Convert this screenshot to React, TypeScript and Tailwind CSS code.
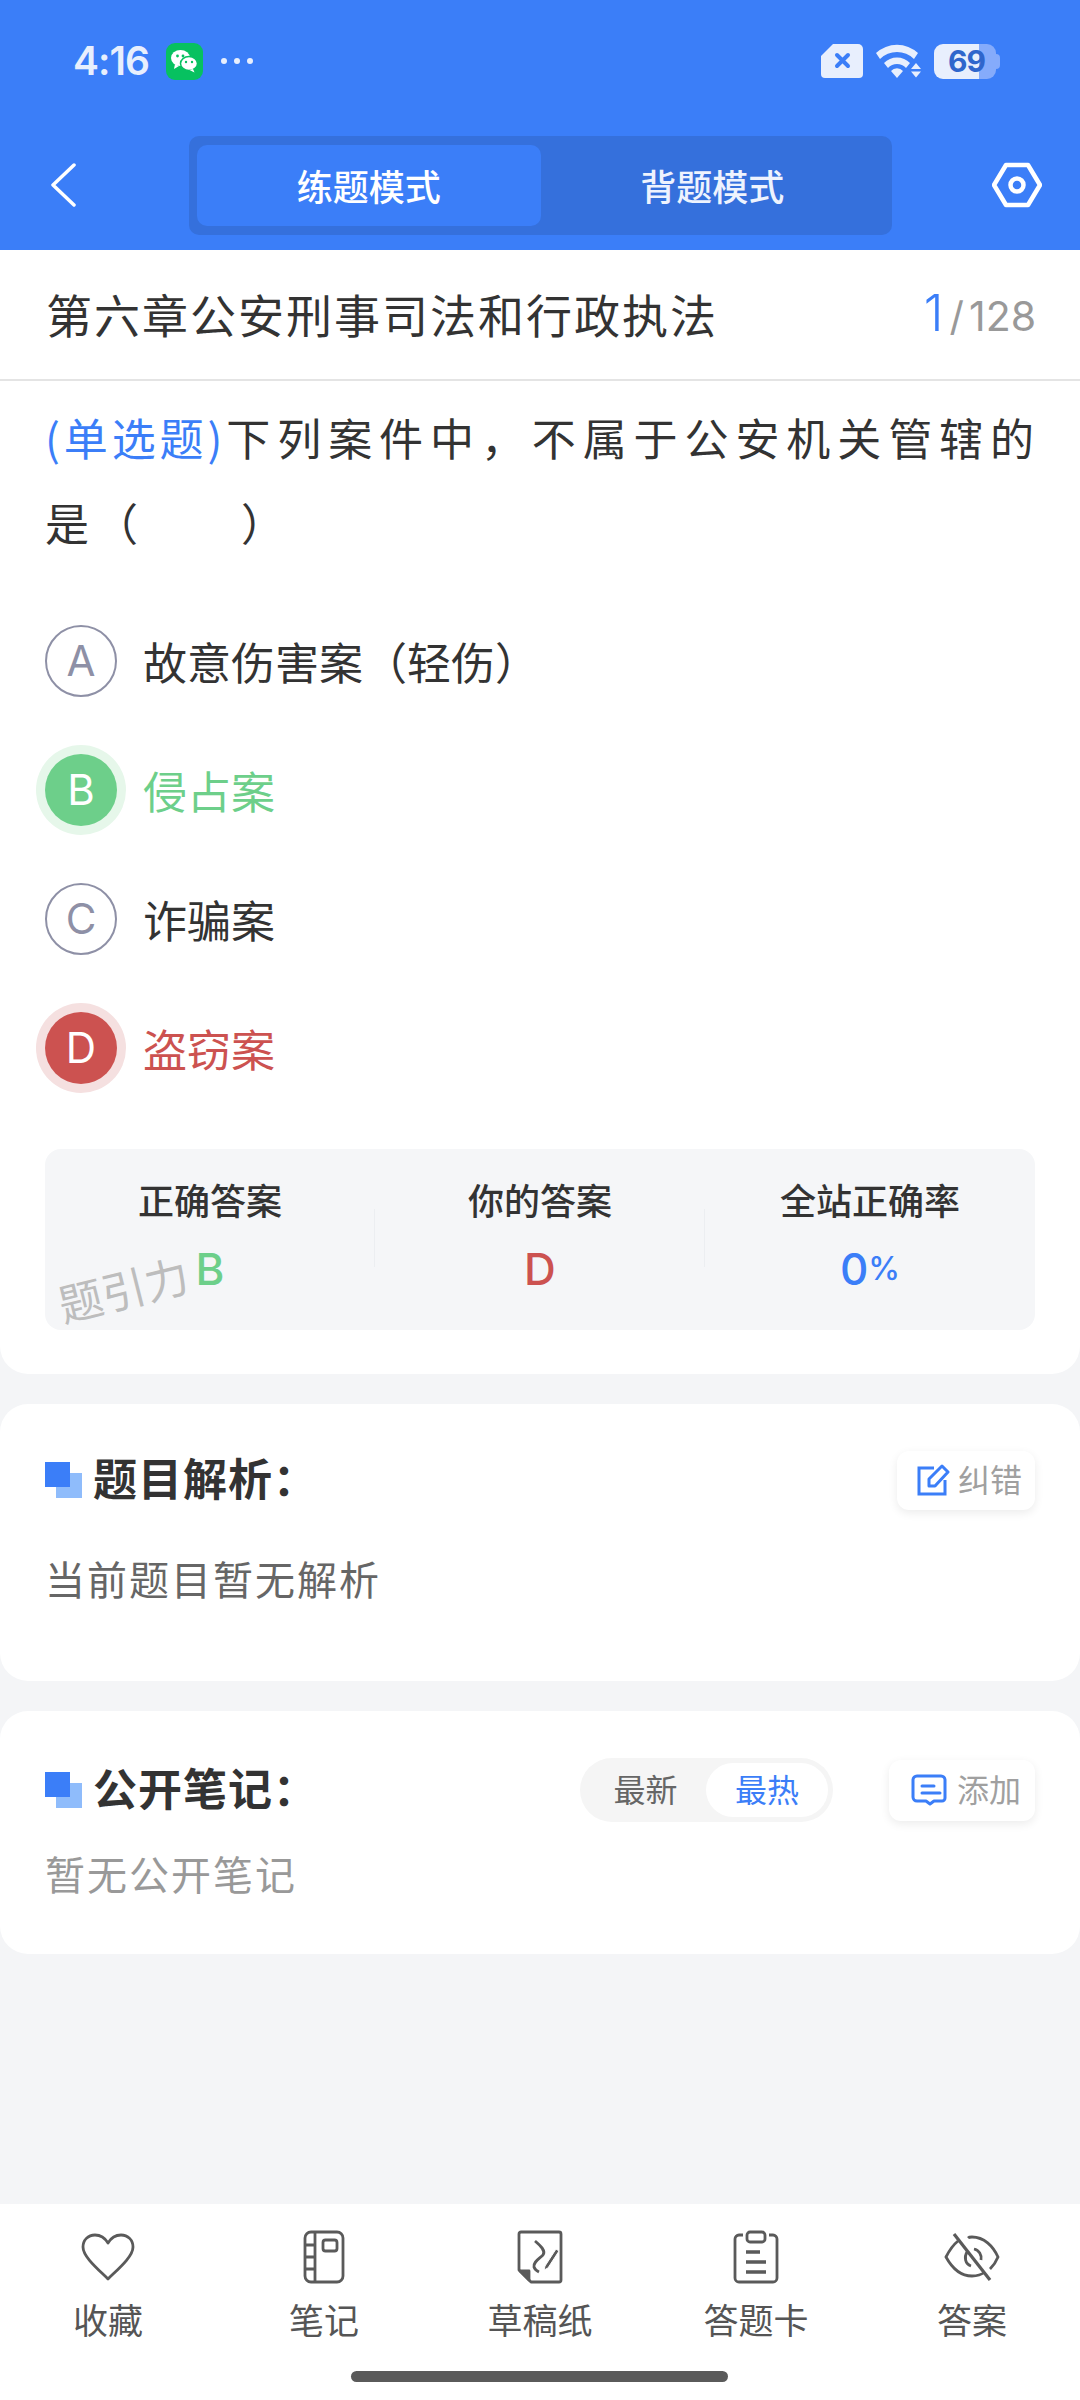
import React from "react";

const options = [
  { key: "A", text: "故意伤害案（轻伤）", state: "idle" },
  { key: "B", text: "侵占案", state: "right" },
  { key: "C", text: "诈骗案", state: "idle" },
  { key: "D", text: "盗窃案", state: "wrong" },
];

function StatusBar() {
  return (
    <div className="flex h-[122px] items-center justify-between pl-[73px] pr-[80px]">
      <div className="flex items-center">
        <span className="font-['Inter',sans-serif] text-[39px] font-semibold tracking-[-1px] text-[#e8effd]">4:16</span>
        <div className="ml-[17px] flex h-[37px] w-[37px] items-center justify-center rounded-[9px] bg-[#07c160]">
          <svg width="28" height="24" viewBox="0 0 28 24">
            <ellipse cx="10.5" cy="9" rx="9.5" ry="8" fill="#fff" />
            <path d="M5 15l-1 5 5-3z" fill="#fff" />
            <ellipse cx="19" cy="14.5" rx="8.5" ry="7" fill="#fff" stroke="#07c160" strokeWidth="1.5" />
            <path d="M23 20l1.5 3.5-5-2.5z" fill="#fff" />
            <circle cx="7.5" cy="7" r="1.4" fill="#07c160" />
            <circle cx="13" cy="7" r="1.4" fill="#07c160" />
            <circle cx="16" cy="13" r="1.2" fill="#07c160" />
            <circle cx="22" cy="13" r="1.2" fill="#07c160" />
          </svg>
        </div>
        <div className="ml-[18px] flex gap-[7px]">
          <span className="h-[6px] w-[6px] rounded-full bg-[#e8effd]" />
          <span className="h-[6px] w-[6px] rounded-full bg-[#e8effd]" />
          <span className="h-[6px] w-[6px] rounded-full bg-[#e8effd]" />
        </div>
      </div>
      <div className="flex items-center">
        <svg width="44" height="36" viewBox="0 0 44 36">
          <path d="M13 1h25a5 5 0 0 1 5 5v25a4 4 0 0 1-4 4H5a4 4 0 0 1-4-4V13z" fill="#e8effd" />
          <path d="M17 12l11 11M28 12L17 23" stroke="#3b7ef8" strokeWidth="4" strokeLinecap="round" />
        </svg>
        <svg className="ml-[12px]" width="46" height="36" viewBox="0 0 46 36">
          <path d="M0 10a31 31 0 0 1 42 0l-4 6a24 24 0 0 0-34 0z" fill="#e8effd" />
          <path d="M8 20a18 18 0 0 1 26 0l-4 5a12 12 0 0 0-18 0z" fill="#e8effd" />
          <path d="M15 28a8 8 0 0 1 12 0l-6 7z" fill="#e8effd" />
          <path d="M40 20l5 6H35zM35 28.500h10l-5 6z" fill="#e8effd" />
        </svg>
        <div className="relative ml-[12px] flex h-[35px] w-[66px] items-center">
          <div className="absolute right-0 top-[10px] h-[15px] w-[6px] rounded-r-[4px] bg-[#85abfb]" />
          <div className="absolute left-[40px] top-0 h-[35px] w-[22px] rounded-r-[9px] bg-[#85abfb]" />
          <div className="absolute left-0 top-0 h-[35px] w-[45px] rounded-l-[9px] bg-[#e8effd]" />
          <span className="relative ml-[14px] font-['Inter',sans-serif] text-[30px] font-bold tracking-[-1px] text-[#2f66cc]">69</span>
        </div>
      </div>
    </div>
  );
}

function NavBar() {
  return (
    <div className="flex h-[128px] items-center pb-[2px]">
      <div className="flex w-[189px] pl-[50px]">
        <svg width="27" height="44" viewBox="0 0 27 44" fill="none" stroke="#fff" strokeWidth="3.500" strokeLinecap="round" strokeLinejoin="round">
          <path d="M24 2L3 22l21 20" />
        </svg>
      </div>
      <div className="flex h-[99px] w-[703px] rounded-[10px] bg-[#3570dc] px-[8px] py-[9px]">
        <div className="flex flex-1 items-center justify-center rounded-[10px] bg-[#3b7ef8] text-[36px] font-medium text-white">练题模式</div>
        <div className="flex flex-1 items-center justify-center text-[36px] font-medium text-[#eef3fe]">背题模式</div>
      </div>
      <div className="flex flex-1 justify-end pr-[38px]">
        <svg width="50" height="46" viewBox="0 0 50 46" fill="none" stroke="#fff" strokeWidth="4.500" strokeLinejoin="round">
          <path d="M14 3h22l12 20-12 20H14L2 23z" />
          <circle cx="25" cy="23" r="6.500" />
        </svg>
      </div>
    </div>
  );
}

function OptionRow({ item }: { item: (typeof options)[number] }) {
  return (
    <div className="flex h-[129px] items-center">
      {item.state === "idle" && (
        <div className="flex h-[72px] w-[72px] items-center justify-center rounded-full border-2 border-[#8e90a6] font-['Inter',sans-serif] text-[42px] text-[#8e90a6]">{item.key}</div>
      )}
      {item.state === "right" && (
        <div className="flex h-[72px] w-[72px] items-center justify-center rounded-full bg-[#6dcf8a] font-['Inter',sans-serif] text-[42px] text-white shadow-[0_0_0_9px_#e6f7ea]">{item.key}</div>
      )}
      {item.state === "wrong" && (
        <div className="flex h-[72px] w-[72px] items-center justify-center rounded-full bg-[#cc5250] font-['Inter',sans-serif] text-[42px] text-white shadow-[0_0_0_9px_#f5e0e0]">{item.key}</div>
      )}
      <span
        className={
          item.state === "right"
            ? "ml-[26px] text-[44px] text-[#6dcf8a]"
            : item.state === "wrong"
              ? "ml-[26px] text-[44px] text-[#cc5250]"
              : "ml-[26px] text-[44px] text-[#333333]"
        }
      >
        {item.text}
      </span>
    </div>
  );
}

function SectionTitle({ text }: { text: string }) {
  return (
    <div className="flex items-center">
      <div className="relative h-[36px] w-[37px]">
        <div className="absolute bottom-0 right-0 h-[25px] w-[26px] bg-[#8fbcfb]" />
        <div className="absolute left-0 top-0 h-[25px] w-[25px] bg-[#3b7ef8]" />
      </div>
      <span className="ml-[11px] pb-[6px] text-[44px] font-bold leading-[60px] tracking-[1px] text-[#333333]">{text}</span>
    </div>
  );
}

function Stat({ label, children, divider }: { label: string; children: React.ReactNode; divider?: boolean }) {
  return (
    <div className="relative flex flex-col items-center pt-[27px]">
      <span className="text-[36px] font-medium leading-[46px] text-[#333333]">{label}</span>
      <div className="mt-[24px] flex h-[46px] items-center font-['Inter',sans-serif] text-[44px] font-medium">{children}</div>
      {divider && <div className="absolute right-0 top-[60px] h-[58px] w-px bg-[#eceef1]" />}
    </div>
  );
}

function BottomItem({ label, children }: { label: string; children: React.ReactNode }) {
  return (
    <div className="flex w-[216px] flex-col items-center">
      <div className="flex h-[56px] items-center justify-center">{children}</div>
      <span className="mt-[11px] text-[35px] leading-[46px] text-[#555555]">{label}</span>
    </div>
  );
}

export default function App() {
  return (
    <div className="flex h-[2400px] w-[1080px] flex-col overflow-hidden bg-[#f4f5f7] font-['Noto_Sans_CJK_SC','Noto_Sans',sans-serif]">
      <div className="h-[250px] bg-[#3b7ef8]">
        <StatusBar />
        <NavBar />
      </div>

      <div className="rounded-b-[28px] bg-white pb-[44px]">
        <div className="flex h-[131px] items-center justify-between border-b-2 border-[#e4e4e4] pb-[3px] pl-[46px] pr-[44px]">
          <span className="text-[46px] tracking-[2px] text-[#333333]">第六章公安刑事司法和行政执法</span>
          <div className="flex items-baseline font-['Inter',sans-serif] text-[#999999]">
            <span className="text-[50px] font-light text-[#3b7ef8]">1</span>
            <span className="ml-[6px] text-[40px]">/</span>
            <span className="ml-[5px] text-[41px]">128</span>
          </div>
        </div>

        <div className="pl-[45px] pr-[41px] pt-[14px]">
          <p className="text-justify text-[44px] leading-[85px] tracking-[5px] text-[#333333]">
            <span className="tracking-[2px] text-[#3b7ef8]">(单选题)</span>下列案件中，不属于公安机关管辖的是（　　）
          </p>

          <div className="mt-[31px]">
            {options.map((item) => (
              <OptionRow key={item.key} item={item} />
            ))}
          </div>

          <div className="relative mr-[4px] mt-[37px] grid h-[181px] grid-cols-3 rounded-[16px] bg-[#f5f6f8]">
            <Stat label="正确答案" divider>
              <span className="text-[#6dcf8a]">B</span>
            </Stat>
            <Stat label="你的答案" divider>
              <span className="text-[#cc5250]">D</span>
            </Stat>
            <Stat label="全站正确率">
              <span className="text-[#3b7ef8]">0</span>
              <span className="text-[32px] text-[#3b7ef8]">%</span>
            </Stat>
            <span className="absolute left-[12px] top-[113px] -rotate-[14deg] text-[44px] leading-[52px] text-[#bdbdbd]">题引力</span>
          </div>
        </div>
      </div>

      <div className="mt-[30px] h-[277px] rounded-[28px] bg-white px-[45px] pt-[43px]">
        <div className="flex items-center justify-between">
          <SectionTitle text="题目解析：" />
          <div className="flex h-[59px] w-[138px] items-center gap-[7px] rounded-[12px] bg-white pl-[20px] shadow-[0_3px_10px_rgba(0,0,0,0.08)]">
            <svg width="34" height="32" viewBox="0 0 34 32" fill="none" stroke="#3b7ef8" strokeWidth="3">
              <path d="M17 4H2v26h26V16" />
              <path d="M12 22v-7L25 2l6 6-13 14z" strokeLinejoin="round" />
            </svg>
            <span className="pb-[4px] text-[32px] text-[#a0a0a0]">纠错</span>
          </div>
        </div>
        <p className="mt-[37px] text-[40px] leading-[56px] tracking-[2px] text-[#666666]">当前题目暂无解析</p>
      </div>

      <div className="mt-[30px] h-[243px] rounded-[28px] bg-white px-[45px] pt-[46px]">
        <div className="flex items-center">
          <SectionTitle text="公开笔记：" />
          <div className="ml-auto flex h-[64px] w-[253px] items-center rounded-full bg-[#f5f5f5] p-[5px] text-[32px]">
            <span className="flex-1 pb-[4px] text-center text-[#666666]">最新</span>
            <span className="flex h-[54px] w-[122px] items-center justify-center rounded-full bg-white pb-[4px] text-[#3b7ef8]">最热</span>
          </div>
          <div className="ml-[56px] flex h-[61px] w-[146px] items-center gap-[10px] rounded-[12px] bg-white pl-[22px] shadow-[0_3px_10px_rgba(0,0,0,0.08)]">
            <svg width="36" height="32" viewBox="0 0 36 32" fill="none" stroke="#3b7ef8" strokeWidth="3" strokeLinecap="round">
              <path d="M6 2h24a4 4 0 0 1 4 4v18a3 3 0 0 1-3 3h-8l-4 3-4-3H6a4 4 0 0 1-4-4V6a4 4 0 0 1 4-4z" strokeLinejoin="round" />
              <path d="M11 12h12M11 19h18" />
            </svg>
            <span className="pb-[4px] text-[32px] text-[#a0a0a0]">添加</span>
          </div>
        </div>
        <p className="mt-[22px] text-[40px] leading-[56px] tracking-[2px] text-[#999999]">暂无公开笔记</p>
      </div>

      <div className="flex-1" />

      <div className="relative h-[196px] bg-white">
        <div className="flex pt-[25px]">
          <BottomItem label="收藏">
            <svg width="54" height="48" viewBox="0 0 54 48" fill="none" stroke="#5a5a5a" strokeWidth="2.800" strokeLinejoin="round">
              <path d="M27 46C18 37 2 24 2 14 2 7 7 2 14 2c6 0 10 3 13 8 3-5 7-8 13-8 7 0 12 5 12 12 0 10-16 23-25 32z" />
            </svg>
          </BottomItem>
          <BottomItem label="笔记">
            <svg width="42" height="54" viewBox="0 0 42 54" fill="none" stroke="#5a5a5a" strokeWidth="2.800">
              <rect x="2" y="2" width="38" height="50" rx="6" />
              <path d="M12 2v50M2 15h10M2 27h10M2 39h10" />
              <rect x="20" y="10" width="14" height="11" rx="2.500" />
            </svg>
          </BottomItem>
          <BottomItem label="草稿纸">
            <svg width="46" height="54" viewBox="0 0 46 54" fill="none" stroke="#5a5a5a" strokeWidth="2.800" strokeLinejoin="round">
              <path d="M14 52h28a2 2 0 0 0 2-2V4a2 2 0 0 0-2-2H4a2 2 0 0 0-2 2v36z" />
              <path d="M3 41h9v9z" fill="#5a5a5a" />
              <path d="M18 11c6 5 11 10 8 14-4 4-10 7-9 12 1 3 3 4 5 5" />
              <path d="M28 36l11-17 3 2-11 17-4 2z" fill="#5a5a5a" stroke="#fff" strokeWidth="1" />
            </svg>
          </BottomItem>
          <BottomItem label="答题卡">
            <svg width="46" height="54" viewBox="0 0 46 54" fill="none" stroke="#5a5a5a" strokeWidth="2.800">
              <path d="M10 5H6a4 4 0 0 0-4 4v39a4 4 0 0 0 4 4h34a4 4 0 0 0 4-4V9a4 4 0 0 0-4-4h-4" />
              <rect x="14" y="2" width="18" height="10" rx="3" />
              <path d="M13 22h14M13 32h20M13 42h20" strokeWidth="3.500" />
            </svg>
          </BottomItem>
          <BottomItem label="答案">
            <svg width="56" height="48" viewBox="0 0 56 48" fill="none" stroke="#5a5a5a" strokeWidth="2.800">
              <path d="M14 8C9 12 5 18 2 24c6 11 14 19 26 19 5 0 9-1 13-4M24 5c1-1 3-1 4-1 12 0 21 9 26 20-2 5-5 9-8 12" />
              <path d="M23 19c-3 5-2 12 4 14M30 16c5 1 8 6 7 11" />
              <path d="M10 1l36 46" strokeWidth="3.200" />
            </svg>
          </BottomItem>
        </div>
        <div className="absolute bottom-[18px] left-[351px] h-[11px] w-[377px] rounded-full bg-[#5a5a5a]" />
      </div>
    </div>
  );
}
